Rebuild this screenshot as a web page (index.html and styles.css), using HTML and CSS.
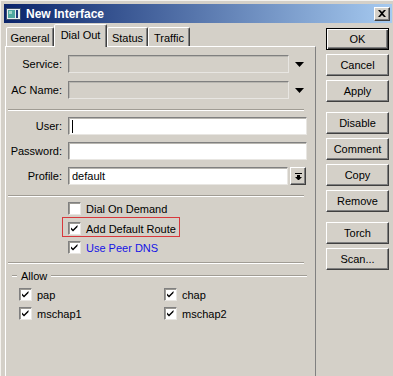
FILE: index.html
```html
<!DOCTYPE html>
<html lang="en">
<head>
    <meta charset="UTF-8" />
    <title>New Interface</title>
    <link rel="stylesheet" href="styles.css">
</head>
<body>
    <div class="window">
        <div class="titlebar">
            <svg class="app-icon" width="15" height="12" viewBox="0 0 15 12">
                <rect x="0.5" y="0.5" width="14" height="11" fill="#e8eef0" stroke="#3b4d6b"/>
                <rect x="2" y="2" width="7" height="8" fill="#4fa8a0"/>
                <rect x="3" y="3" width="3" height="3" fill="#9ed4c8"/>
                <rect x="10" y="2" width="2" height="8" fill="#1d3a7a"/>
            </svg>
            <span class="title">New Interface</span>
            <button class="close-btn">
                <svg width="8" height="7" viewBox="0 0 8 7">
                    <path d="M0 0h2l2 2 2-2h2L5 3.5 8 7H6L4 5 2 7H0l3-3.5z" fill="#000"/>
                </svg>
            </button>
        </div>

        <div class="main">
            <div class="tabs-area">
                <div class="tabs">
                    <div class="tab tab-general">General</div>
                    <div class="tab tab-dial active">Dial Out</div>
                    <div class="tab tab-status">Status</div>
                    <div class="tab tab-traffic">Traffic</div>
                </div>
                <div class="panel">
                    <div class="row row-first">
                        <span class="label">Service:</span>
                        <div class="field disabled field-drop"></div>
                        <span class="drop-arrow">
                            <svg width="9" height="5" viewBox="0 0 9 5"><polygon points="0,0 9,0 4.5,5" fill="#000"/></svg>
                        </span>
                    </div>
                    <div class="row">
                        <span class="label">AC Name:</span>
                        <div class="field disabled field-drop"></div>
                        <span class="drop-arrow">
                            <svg width="9" height="5" viewBox="0 0 9 5"><polygon points="0,0 9,0 4.5,5" fill="#000"/></svg>
                        </span>
                    </div>

                    <div class="sep"></div>

                    <div class="row row-after-sep">
                        <span class="label">User:</span>
                        <div class="field field-wide"><span class="caret"></span></div>
                    </div>
                    <div class="row">
                        <span class="label">Password:</span>
                        <div class="field field-wide"></div>
                    </div>
                    <div class="row">
                        <span class="label">Profile:</span>
                        <div class="field field-profile">default</div>
                        <span class="list-btn">
                            <svg width="7" height="7" viewBox="0 0 7 7">
                                <rect x="0" y="0" width="7" height="1" fill="#000"/>
                                <rect x="2" y="2" width="3" height="2" fill="#000"/>
                                <polygon points="0,4 7,4 3.5,7.5" fill="#000"/>
                            </svg>
                        </span>
                    </div>

                    <div class="sep"></div>

                    <div class="options">
                        <div class="check">
                            <span class="box"></span>
                            <span>Dial On Demand</span>
                        </div>
                        <div class="marked">
                            <div class="check">
                                <span class="box checked"></span>
                                <span>Add Default Route</span>
                            </div>
                        </div>
                        <div class="check check-last">
                            <span class="box checked"></span>
                            <span class="blue">Use Peer DNS</span>
                        </div>
                    </div>

                    <div class="sep sep-short"></div>

                    <div class="group-head">
                        <span class="dash"></span>
                        <span class="group-title">Allow</span>
                        <span class="group-line"></span>
                    </div>
                    <div class="allow-grid">
                        <div class="check"><span class="box checked"></span><span>pap</span></div>
                        <div class="check"><span class="box checked"></span><span>chap</span></div>
                        <div class="check"><span class="box checked"></span><span>mschap1</span></div>
                        <div class="check"><span class="box checked"></span><span>mschap2</span></div>
                    </div>
                </div>
            </div>

            <div class="buttons">
                <button class="btn default">OK</button>
                <button class="btn">Cancel</button>
                <button class="btn">Apply</button>
                <button class="btn group-start">Disable</button>
                <button class="btn">Comment</button>
                <button class="btn">Copy</button>
                <button class="btn">Remove</button>
                <button class="btn group-start">Torch</button>
                <button class="btn">Scan...</button>
            </div>
        </div>
    </div>
</body>
</html>
```

FILE: styles.css
```css
body {
    margin: 0;
    font-family: 'Liberation Sans', Arial, sans-serif;
    font-size: 11px;
    color: #000;
    background: #d4d0c8;
}
.window {
    width: 393px;
    height: 376px;
    box-sizing: border-box;
    padding: 4px 1px 0 4px;
    background: #d4d0c8;
    box-shadow: inset 1px 1px 0 #f4f2ee;
    overflow: hidden;
}
.titlebar {
    height: 19px;
    display: flex;
    align-items: center;
    padding-left: 2px;
    background: linear-gradient(to right, #0a246a, #a6caf0);
}
.app-icon {
    flex: none;
}
.title {
    margin-left: 5px;
    color: #fff;
    font-weight: bold;
    font-size: 12px;
}
.close-btn {
    margin-left: auto;
    margin-right: 2px;
    width: 16px;
    height: 14px;
    padding: 0;
    display: flex;
    align-items: center;
    justify-content: center;
    background: #d4d0c8;
    border: 1px solid;
    border-color: #fff #404040 #404040 #fff;
    box-shadow: inset -1px -1px 0 #808080;
}

.main {
    display: flex;
    padding-left: 1px;
    height: 353px;
}
.tabs-area {
    width: 311px;
    display: flex;
    flex-direction: column;
}
.tabs {
    height: 23px;
    display: flex;
    align-items: flex-end;
    padding-left: 1px;
}
.tab {
    height: 19px;
    box-sizing: border-box;
    display: flex;
    align-items: center;
    justify-content: center;
    padding-top: 1px;
    border: 1px solid;
    border-bottom: none;
    border-color: #fff #404040 transparent #fff;
    box-shadow: inset -1px 0 0 #808080;
    border-radius: 2px 2px 0 0;
    background: #d4d0c8;
}
.tab-general { width: 48px; }
.tab-dial { width: 53px; }
.tab-status { width: 41px; }
.tab-traffic { width: 42px; }
.tab.active {
    height: 23px;
    margin-bottom: -1px;
    padding-bottom: 3px;
    position: relative;
    z-index: 1;
}
.panel {
    flex: 1;
    border-top: 1px solid #fff;
    border-left: 1px solid #fff;
    border-right: 1px solid #808080;
}

.row {
    display: flex;
    align-items: center;
    height: 18px;
    margin-top: 7px;
}
.row-first {
    margin-top: 8px;
}
.row-first + .row {
    margin-top: 8px;
}
.row-after-sep {
    margin-top: 6px;
}
.label {
    width: 56px;
    text-align: right;
}
.field {
    height: 18px;
    box-sizing: border-box;
    margin-left: 6px;
    padding-left: 3px;
    display: flex;
    align-items: center;
    background: #fff;
    border: 1px solid;
    border-color: #808080 #e8e6e2 #e8e6e2 #808080;
    box-shadow: inset 1px 1px 0 #b8b6b0;
}
.field.disabled {
    background: #d4d0c8;
}
.field-drop { width: 221px; }
.field-wide { width: 239px; }
.field-profile { width: 220px; }
.caret {
    width: 1px;
    height: 13px;
    background: #000;
}
.drop-arrow {
    width: 20px;
    display: flex;
    justify-content: center;
}
.list-btn {
    margin-left: 2px;
    width: 16px;
    height: 18px;
    box-sizing: border-box;
    display: flex;
    align-items: center;
    justify-content: center;
    border: 1px solid;
    border-color: #fff #404040 #404040 #fff;
    box-shadow: inset -1px -1px 0 #808080;
}

.sep {
    margin: 10px 11px 0 2px;
    border-top: 1px solid #a09c94;
    border-bottom: 1px solid #fff;
}
.sep-short {
    margin-top: 8px;
}

.options {
    margin-top: 5px;
    padding-left: 56px;
}
.options > .check {
    padding-left: 6px;
}
.check {
    display: flex;
    align-items: center;
    gap: 5px;
    height: 13px;
}
.marked {
    margin-top: 2px;
    width: 111px;
    padding: 4px 0 1px 5px;
    border: 1px solid #d8383c;
}
.check-last {
    margin-top: 4px;
}
.box {
    width: 13px;
    height: 13px;
    box-sizing: border-box;
    background: #fff;
    border: 1px solid;
    border-color: #808080 #e8e6e2 #e8e6e2 #808080;
    box-shadow: inset 1px 1px 0 #9c9a94;
}
.box.checked {
    background: #fff url("data:image/svg+xml,%3Csvg xmlns='http://www.w3.org/2000/svg' width='11' height='11'%3E%3Cpath d='M2 4.5l2 2 4.5-4.5v2L4 8.5 2 6.5z' fill='%23000'/%3E%3C/svg%3E") no-repeat 0 0;
}
.blue {
    color: #1414e6;
}

.group-head {
    margin-top: 5px;
    height: 13px;
    display: flex;
    align-items: center;
}
.dash,
.group-line {
    border-top: 1px solid #a09c94;
    border-bottom: 1px solid #fff;
}
.dash {
    width: 5px;
    margin-left: 6px;
}
.group-title {
    margin: 0 4px;
}
.group-line {
    flex: 1;
    margin-right: 8px;
}
.allow-grid {
    margin-top: 6px;
    padding-left: 13px;
    display: grid;
    grid-template-columns: 145px auto;
    row-gap: 6px;
}

.buttons {
    margin-left: 10px;
    margin-top: 5px;
    display: flex;
    flex-direction: column;
    gap: 4px;
}
.btn {
    width: 63px;
    height: 22px;
    padding: 0;
    font: inherit;
    color: #000;
    background: #d4d0c8;
    border: 1px solid;
    border-color: #fff #404040 #404040 #fff;
    box-shadow: inset -1px -1px 0 #808080;
}
.btn.default {
    border-color: #000;
    box-shadow: inset 1px 1px 0 #fff, inset -1px -1px 0 #404040, inset -2px -2px 0 #808080;
}
.btn.group-start {
    margin-top: 6px;
}
```
